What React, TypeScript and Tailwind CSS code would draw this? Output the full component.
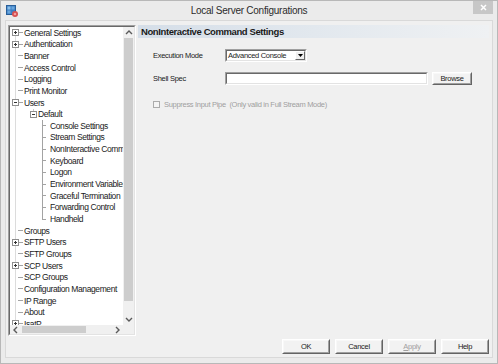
import React from "react";

type Row = { label: string; level: 0 | 1 | 2; box?: "plus" | "minus" };

const rows: Row[] = [
  { label: "General Settings", level: 0, box: "plus" },
  { label: "Authentication", level: 0, box: "plus" },
  { label: "Banner", level: 0 },
  { label: "Access Control", level: 0 },
  { label: "Logging", level: 0 },
  { label: "Print Monitor", level: 0 },
  { label: "Users", level: 0, box: "minus" },
  { label: "Default", level: 1, box: "minus" },
  { label: "Console Settings", level: 2 },
  { label: "Stream Settings", level: 2 },
  { label: "NonInteractive Command Settings", level: 2 },
  { label: "Keyboard", level: 2 },
  { label: "Logon", level: 2 },
  { label: "Environment Variables", level: 2 },
  { label: "Graceful Termination", level: 2 },
  { label: "Forwarding Control", level: 2 },
  { label: "Handheld", level: 2 },
  { label: "Groups", level: 0 },
  { label: "SFTP Users", level: 0, box: "plus" },
  { label: "SFTP Groups", level: 0 },
  { label: "SCP Users", level: 0, box: "plus" },
  { label: "SCP Groups", level: 0 },
  { label: "Configuration Management", level: 0 },
  { label: "IP Range", level: 0 },
  { label: "About", level: 0 },
  { label: "IsatP", level: 0, box: "plus" },
];

function ExpBox({ x, kind }: { x: number; kind: "plus" | "minus" }) {
  return (
    <g>
      <rect x={x + 0.5} y={2.5} width={6} height={6} fill="#fff" stroke="#8e8e8e" />
      <line x1={x + 2} x2={x + 5} y1={5.5} y2={5.5} stroke="#333" />
      {kind === "plus" && <line x1={x + 3.5} x2={x + 3.5} y1={4} y2={7} stroke="#333" />}
    </g>
  );
}

// connector lines + expander for one tree row
function Guide({ row, first, lastChild }: { row: Row; first: boolean; lastChild: boolean }) {
  const w = row.level === 0 ? 14 : row.level === 1 ? 28 : 39;
  return (
    <svg width={w} className="h-full shrink-0 overflow-visible" shapeRendering="crispEdges">
      <line x1={5.5} x2={5.5} y1={first ? 5.5 : 0} y2="100%" stroke="#dcdcdc" />
      {row.level === 0 && <line x1={row.box ? 9 : 8} x2={13} y1={5.5} y2={5.5} stroke="#a3a3a3" />}
      {row.level === 0 && row.box && <ExpBox x={2} kind={row.box} />}
      {row.level === 1 && (
        <>
          <line x1={23.5} x2={23.5} y1={0} y2={3} stroke="#c8c8c8" />
          <ExpBox x={20} kind={row.box ?? "minus"} />
        </>
      )}
      {row.level === 2 && (
        <>
          <line x1={32.5} x2={32.5} y1={0} y2={lastChild ? 5.5 : "100%"} stroke="#a3a3a3" />
          <line x1={33} x2={36} y1={5.5} y2={5.5} stroke="#a3a3a3" />
        </>
      )}
    </svg>
  );
}

function Chevron({ dir }: { dir: "up" | "down" | "left" | "right" }) {
  const pts = {
    up: "1,5 4,2 7,5",
    down: "1,2 4,5 7,2",
    left: "5,1 2,4 5,7",
    right: "2,1 5,4 2,7",
  }[dir];
  return (
    <svg width="8" height="8" viewBox="0 0 8 8">
      <polyline points={pts} fill="none" stroke="#5a5a5a" strokeWidth="1.4" />
    </svg>
  );
}

function Sunken({ className, children }: { className: string; children?: React.ReactNode }) {
  return (
    <div className={`border border-t-[#a0a0a0] border-l-[#a0a0a0] border-b-white border-r-white ${className}`}>
      <div className="w-full h-full border border-t-[#696969] border-l-[#696969] border-b-[#e3e3e3] border-r-[#e3e3e3] bg-white flex items-center">
        {children}
      </div>
    </div>
  );
}

function Btn({ children, className }: { children: React.ReactNode; className: string }) {
  return (
    <div className={`border border-t-white border-l-white border-b-[#646464] border-r-[#646464] ${className}`}>
      <div className="w-full h-full border border-t-[#f8f8f8] border-l-[#f8f8f8] border-b-[#a0a0a0] border-r-[#a0a0a0] bg-[#f2f2f2] flex items-center justify-center text-[7.5px] tracking-[-0.3px] leading-none">
        {children}
      </div>
    </div>
  );
}

function Tree() {
  return (
    <div className="w-[128px] h-[311px] border border-t-[#a0a0a0] border-l-[#a0a0a0] border-b-white border-r-white shrink-0">
      <div className="w-full h-full border border-t-[#696969] border-l-[#696969] border-b-[#e3e3e3] border-r-[#e3e3e3] flex flex-col">
        <div className="flex flex-1 min-h-0">
          <div className="flex-1 bg-white overflow-hidden text-[8.5px] tracking-[-0.4px] text-[#1a1a1a]">
            {rows.map((r, i) => (
              <div key={r.label} className="flex h-[11.67px] items-center whitespace-nowrap">
                <Guide row={r} first={i === 0} lastChild={r.label === "Handheld"} />
                <span className={`leading-none ${r.level === 2 ? "pl-[1px]" : ""}`}>{r.label}</span>
              </div>
            ))}
          </div>
          <div className="w-[11px] bg-[#f0f0f0] flex flex-col items-center">
            <div className="h-[11px] flex items-center justify-center"><Chevron dir="up" /></div>
            <div className="flex-1 w-full px-[1px]">
              <div className="h-[263px] bg-[#cdcdcd]" />
            </div>
            <div className="h-[11px] flex items-center justify-center"><Chevron dir="down" /></div>
          </div>
        </div>
        <div className="flex h-[9px] bg-[#f0f0f0]">
          <div className="w-[113px] flex items-center">
            <div className="w-[11px] flex justify-center"><Chevron dir="left" /></div>
            <div className="ml-[1px] w-[64px] h-[7px] bg-[#cdcdcd]" />
            <div className="flex-1" />
            <div className="w-[11px] flex justify-center"><Chevron dir="right" /></div>
          </div>
        </div>
      </div>
    </div>
  );
}

export default function App() {
  return (
    <div className="w-[498px] h-[364px] flex flex-col bg-[#ebebeb] border border-[#b8b8b8] font-['Liberation_Sans',Arial,sans-serif] text-[#1a1a1a]">
      {/* title bar */}
      <div className="h-[19px] flex shrink-0">
        <div className="w-[25px] pl-[5px] pt-[4px]">
          <svg width="12" height="12" viewBox="0 0 12 12">
            <rect x="0.5" y="0.5" width="9" height="9" fill="#3d7fc4" stroke="#2a5f99" />
            <rect x="1.5" y="1.5" width="3" height="3" fill="#8cc0ea" />
            <rect x="5.5" y="1.5" width="3" height="3" fill="#6aa6dc" />
            <rect x="1.5" y="5.5" width="3" height="3" fill="#6aa6dc" />
            <circle cx="9" cy="9" r="3" fill="#d65050" />
            <circle cx="9" cy="9" r="1.3" fill="#f0a0a0" />
          </svg>
        </div>
        <div className="flex-1 flex items-center justify-center text-[10px] tracking-[-0.25px] text-[#2b2b2b]">
          Local Server Configurations
        </div>
        <div className="w-[25px] flex justify-end pr-[4px]">
          <div className="w-[20px] h-[13px] bg-[#c7c7c7] flex items-center justify-center">
            <svg width="7" height="7" viewBox="0 0 7 7">
              <path d="M1 1 L6 6 M6 1 L1 6" stroke="#fff" strokeWidth="1.5" />
            </svg>
          </div>
        </div>
      </div>

      {/* client area */}
      <div className="flex-1 mx-[4px] mb-[5px] border border-[#d9d9d9] bg-[#f0f0f0] pl-[2px] pr-[3px] pt-[4px] pb-[3px] flex flex-col">
        <div className="flex h-[311px]">
          <Tree />
          <div className="flex-1 ml-[2px] flex flex-col">
            <div className="h-[13px] px-[3px] flex items-center bg-linear-to-r from-[#d5dee8] via-[#e2e8ee] to-[#eff1f3] font-bold text-[9.5px] tracking-[-0.4px] leading-none">
              NonInteractive Command Settings
            </div>
            <div className="pl-[15px] pt-[11px] text-[7.5px] tracking-[-0.3px] leading-none">
              <div className="flex h-[13px] items-center">
                <div className="w-[72px]">Execution Mode</div>
                <Sunken className="w-[82px] h-[13px]">
                  <span className="flex-1 pl-[1px] whitespace-nowrap overflow-hidden">Advanced Console</span>
                  <div className="w-[10px] h-full border border-t-white border-l-white border-b-[#696969] border-r-[#696969] bg-[#f0f0f0] flex items-center justify-center">
                    <svg width="5" height="3" viewBox="0 0 5 3">
                      <path d="M0 0 L5 0 L2.5 3 Z" fill="#000" />
                    </svg>
                  </div>
                </Sunken>
              </div>
              <div className="flex h-[13px] items-center mt-[10px]">
                <div className="w-[72px]">Shell Spec</div>
                <Sunken className="w-[203px] h-[13px]" />
                <Btn className="ml-[4px] w-[40px] h-[13px]">Browse</Btn>
              </div>
              <div className="flex h-[7px] items-center mt-[16px] text-[#9f9f9f]">
                <div className="w-[7px] h-[7px] border border-[#ababab] bg-[#f4f4f4]" />
                <span className="ml-[4px] whitespace-pre">Suppress Input Pipe  (Only valid in Full Stream Mode)</span>
              </div>
            </div>
          </div>
        </div>
        <div className="flex justify-end gap-[5px] mt-[3px] h-[15px]">
          <Btn className="w-[48px] h-[15px]">OK</Btn>
          <Btn className="w-[48px] h-[15px]">Cancel</Btn>
          <Btn className="w-[48px] h-[15px]">
            <span className="text-[#a0a0a0]"><span className="underline">A</span>pply</span>
          </Btn>
          <Btn className="w-[48px] h-[15px]">Help</Btn>
        </div>
      </div>
    </div>
  );
}
